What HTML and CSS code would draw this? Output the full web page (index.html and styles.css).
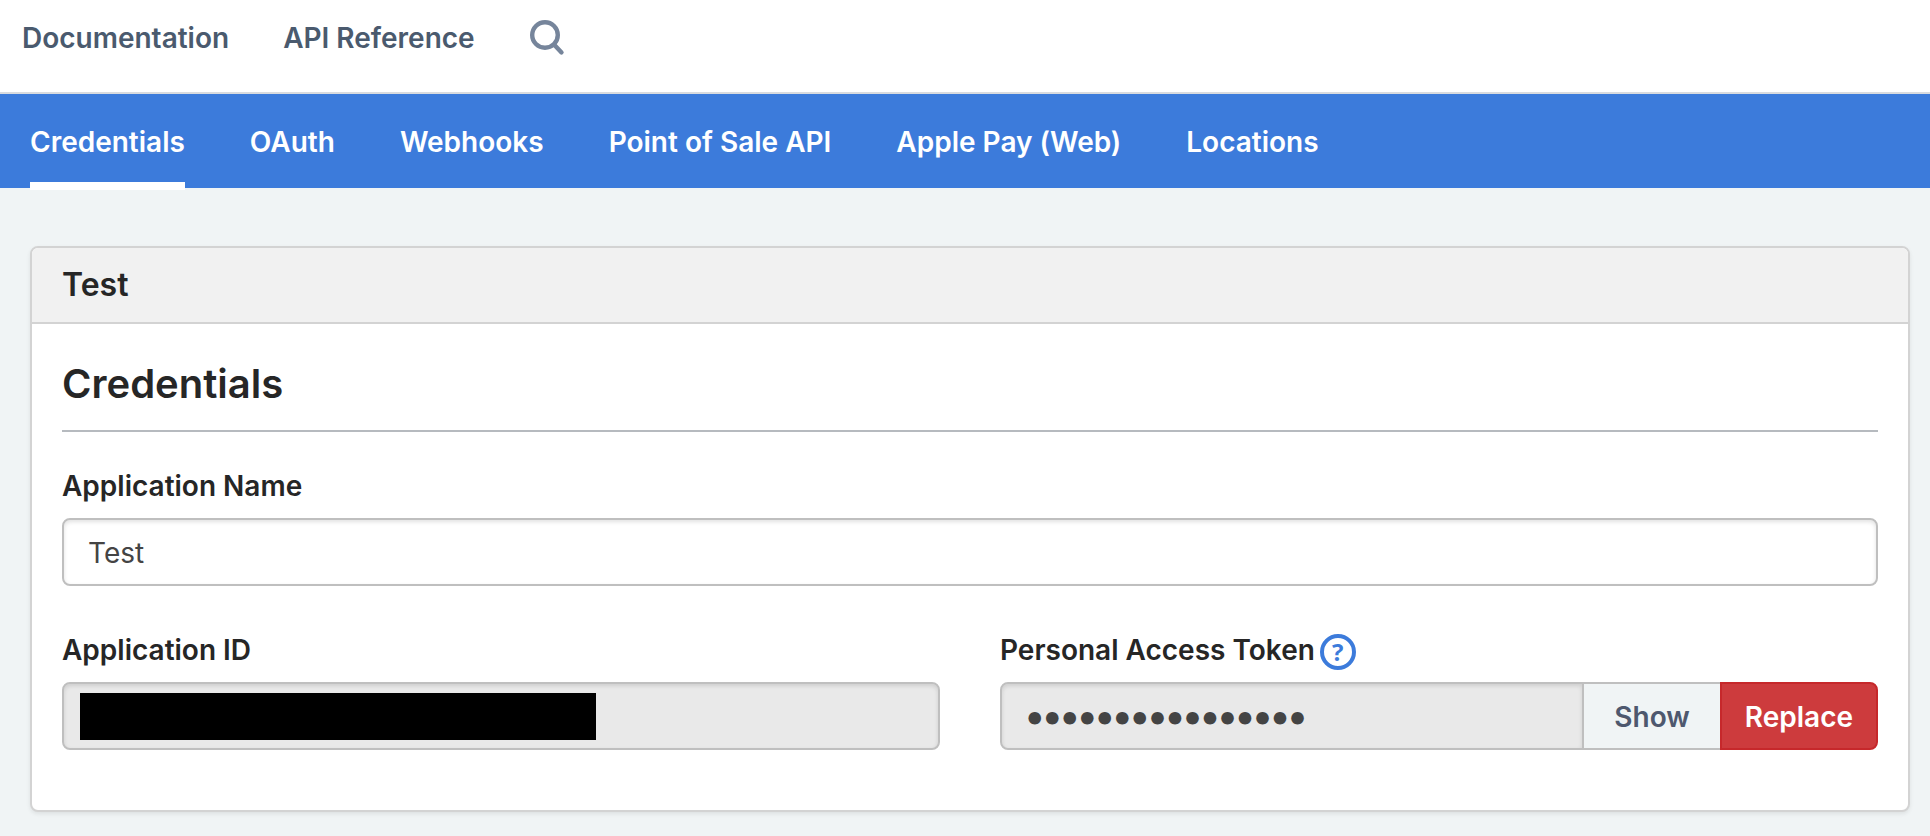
FILE: index.html
```html
<!DOCTYPE html>
<html lang="en">
<head>
<meta charset="utf-8">
<meta name="viewport" content="width=device-width, initial-scale=1">
<title>Credentials</title>
<link rel="stylesheet" href="styles.css">
</head>
<body>
<header class="topbar">
  <a class="topbar-link" href="#">Documentation</a>
  <a class="topbar-link" href="#">API Reference</a>
  <button class="search" type="button" aria-label="Search">
    <svg width="36" height="36" viewBox="0 0 36 36" fill="none" stroke="#76859b" stroke-width="4.4" stroke-linecap="round">
      <circle cx="16" cy="15" r="12.8"/>
      <path d="M25 24.500 32.500 32.500"/>
    </svg>
  </button>
</header>
<nav class="tabs">
  <a class="tab tab-active" href="#" aria-current="page">Credentials</a>
  <a class="tab" href="#">OAuth</a>
  <a class="tab" href="#">Webhooks</a>
  <a class="tab" href="#">Point of Sale API</a>
  <a class="tab" href="#">Apple Pay (Web)</a>
  <a class="tab" href="#">Locations</a>
</nav>
<main class="content">
  <section class="card">
    <h1 class="card-title">Test</h1>
    <form class="card-body">
      <h2 class="section-title">Credentials</h2>
      <div class="field">
        <label class="label" for="app-name">Application Name</label>
        <input class="input" id="app-name" type="text" value="Test">
      </div>
      <div class="columns">
        <div class="field">
          <label class="label" for="app-id">Application ID</label>
          <div class="redacted">
            <input class="input" id="app-id" type="text" readonly>
            <span class="redaction"></span>
          </div>
        </div>
        <div class="field">
          <div class="label-row">
            <label class="label" for="token">Personal Access Token</label>
            <button class="help" type="button" aria-label="About personal access tokens">?</button>
          </div>
          <div class="input-group">
            <input class="input input-secret" id="token" type="password" value="abcdefghijklmnop" readonly>
            <button class="button" type="button">Show</button>
            <button class="button button-danger" type="button">Replace</button>
          </div>
        </div>
      </div>
    </form>
  </section>
</main>
</body>
</html>
```
FILE: styles.css
```css
* {
  box-sizing: border-box;
}

body {
  margin: 0;
  min-height: 100vh;
  background: #f0f4f5;
  color: #262626;
  font-family: Inter, "Liberation Sans", sans-serif;
  font-size: 28px;
  line-height: 40px;
}

.topbar {
  display: flex;
  align-items: center;
  gap: 54px;
  padding: 18px 22px 34px;
  background: #fff;
  border-bottom: 2px solid #d8dbdf;
}

.topbar-link {
  color: #4a5a6e;
  font-weight: 600;
  text-decoration: none;
}

.search {
  display: flex;
  padding: 0;
  border: 0;
  background: none;
}

.tabs {
  display: flex;
  gap: 65px;
  padding: 0 30px;
  background: #3c7bdb;
}

.tab {
  position: relative;
  padding: 28px 0 26px;
  color: #fff;
  font-weight: 600;
  text-decoration: none;
}

.tab-active::after {
  content: "";
  position: absolute;
  left: 0;
  right: 0;
  bottom: -2px;
  height: 8px;
  background: #fff;
}

.content {
  padding: 58px 20px 24px 30px;
}

.card {
  background: #fff;
  border: 2px solid #d3d3d3;
  border-radius: 8px;
  box-shadow: 0 2px 4px rgba(0, 0, 0, 0.08);
}

.card-title {
  margin: 0;
  padding: 17px 30px;
  border-bottom: 2px solid #d3d3d3;
  border-radius: 6px 6px 0 0;
  background: #f1f1f1;
  font-size: 32px;
  line-height: 40px;
  font-weight: 600;
}

.card-body {
  padding: 36px 30px 60px;
}

.section-title {
  margin: 0 0 34px;
  padding-bottom: 22px;
  border-bottom: 2px solid #b6babf;
  font-size: 40px;
  line-height: 48px;
  font-weight: 600;
}

.columns {
  display: grid;
  grid-template-columns: 1fr 1fr;
  gap: 60px;
  margin-top: 44px;
}

.field {
  display: flex;
  flex-direction: column;
  gap: 12px;
}

.label {
  font-weight: 600;
}

.label-row {
  display: flex;
  align-items: flex-end;
  gap: 5px;
  height: 40px;
}

.help {
  width: 36px;
  height: 36px;
  padding: 0;
  border: 4px solid #3c7bdb;
  border-radius: 50%;
  background: #fff;
  color: #3c7bdb;
  font: 700 24px/28px "Open Sans", sans-serif;
}

.input {
  width: 100%;
  height: 68px;
  padding: 2px 24px 0;
  border: 2px solid #bfbfbf;
  border-radius: 8px;
  background: #fff;
  box-shadow: inset 0 2px 4px rgba(0, 0, 0, 0.12);
  color: #444;
  font: inherit;
}

.input:read-only {
  background: #e9e9e9;
}

.input-secret {
  padding: 0 24px 2px;
  font-size: 40px;
  font-weight: 800;
}

.redacted {
  position: relative;
}

.redacted .input {
  display: block;
}

.redaction {
  position: absolute;
  top: 11px;
  left: 18px;
  width: 516px;
  height: 47px;
  background: #000;
}

.input-group {
  display: flex;
}

.input-group .input {
  flex: 1;
  min-width: 0;
  border-radius: 8px 0 0 8px;
}

.button {
  padding: 2px 30px 0;
  border: 2px solid #bfbfbf;
  border-width: 2px 0;
  background: #f0f4f5;
  color: #4e586e;
  font: inherit;
  font-weight: 600;
}

.button-danger {
  padding: 2px 23px 0;
  border: 2px solid #c6282b;
  border-radius: 0 8px 8px 0;
  background: #cd3b3d;
  color: #fff;
}
```
